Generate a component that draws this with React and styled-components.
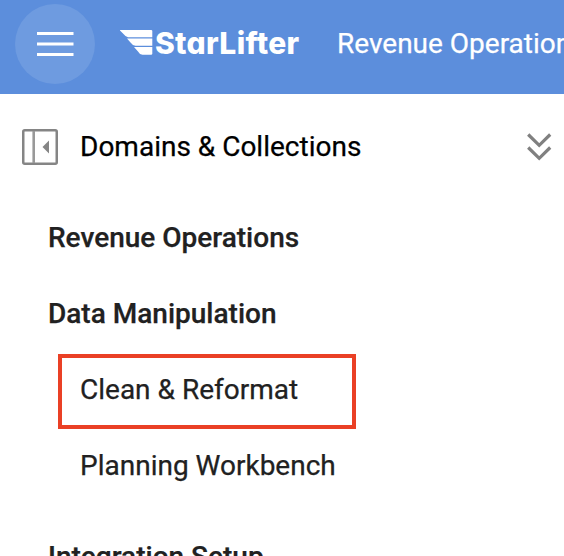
import React from "react";
import styled, { createGlobalStyle } from "styled-components";

const GlobalStyle = createGlobalStyle`
  * { box-sizing: border-box; }
  html, body { margin: 0; height: 556px; overflow: hidden; background: #fff; }
`;

const Page = styled.div`
  width: 564px;
  height: 556px;
  overflow: hidden;
  background: #fff;
  font-family: Roboto, "Liberation Sans", sans-serif;
  font-size: 28px;
  line-height: 32px;
  white-space: nowrap;
  -webkit-text-stroke: 0.25px currentColor;
`;

const TopBar = styled.header`
  display: flex;
  height: 94px;
  padding-left: 15px;
  background: #5c8edc;
  color: #fff;
  overflow: hidden;
`;

const MenuButton = styled.button`
  flex: none;
  width: 80px;
  height: 80px;
  margin-top: 4px;
  padding: 0;
  border: 0;
  border-radius: 50%;
  background: #6e9be0;
`;

const Icon = styled.svg`
  display: block;
  flex: none;
`;

const Brand = styled.div`
  display: flex;
  flex: none;
  width: 217px;
  margin-left: 25px;
  padding-top: 26px;
`;

const BrandName = styled.span`
  margin-left: 1px;
  font-family: Inter, sans-serif;
  font-size: 30px;
  font-weight: 800;
  font-feature-settings: "cv11";
  line-height: 34px;
  letter-spacing: 0.3px;
  -webkit-text-stroke: 0;
`;

const Workspace = styled.span`
  flex: none;
  padding-top: 28px;
`;

const PanelHeader = styled.div`
  display: flex;
  align-items: center;
  height: 104px;
  padding: 2px 12px 0 22px;
  color: #000;
`;

const PanelTitle = styled.h1`
  flex: 1;
  margin: 0 0 0 22px;
  font: inherit;
`;

const Tree = styled.nav`
  display: flex;
  flex-direction: column;
  padding: 2px 0 0 48px;
  color: #212121;
`;

const Group = styled.div`
  height: 76px;
  padding-top: ${(p) => p.$top || 22}px;
  font-weight: 500;
`;

const Item = styled.div`
  width: 298px;
  height: 76px;
  margin-left: 10px;
  padding: 22px 0 0 22px;
`;

const SelectedItem = styled(Item)`
  height: 75px;
  margin-top: 2px;
  margin-bottom: -1px;
  padding: 16px 0 0 18px;
  border: 4px solid #ea4025;
`;

export default function App() {
  return (
    <>
      <GlobalStyle />
      <Page>
        <TopBar>
          <MenuButton aria-label="Menu">
            <Icon width="80" height="80" viewBox="0 0 80 80" fill="#fff">
              <path d="M22 28h36.500v3H22zM22 38.500h36.500v3H22zM22 49h36.500v3H22z" />
            </Icon>
          </MenuButton>
          <Brand>
            <Icon width="34" height="34" viewBox="0 0 34 34" fill="#fff">
              <path d="M-.5 4H31.500L32.300 4.800V11.200H8Q5.500 10.800 3.500 8Z" />
              <path d="M7 12.400H32.300V19.700H15.500Q12.500 19.500 10.500 16.500Z" />
              <path d="M14 20.900H32.300V28L31.500 28.800H22.500Q19.500 28.500 18 25.500Z" />
            </Icon>
            <BrandName>StarLifter</BrandName>
          </Brand>
          <Workspace>Revenue Operations</Workspace>
        </TopBar>
        <PanelHeader>
          <Icon width="36" height="36" viewBox="0 0 36 36">
            <rect x="1.250" y="1.250" width="33.500" height="33.500" rx="1.500" fill="none" stroke="#858585" strokeWidth="2.500" />
            <path d="M11.700 2v32" stroke="#999" strokeWidth="2.600" />
            <path d="M20.500 18L27 11.500v13z" fill="#858585" />
          </Icon>
          <PanelTitle>Domains &amp; Collections</PanelTitle>
          <Icon width="25" height="28" viewBox="0 0 25 28" fill="none" stroke="#808080" strokeWidth="3.200">
            <path d="M1.200 1.500L12.200 12.300L23.200 1.500M1.200 14.500L12.200 25.300L23.200 14.500" />
          </Icon>
        </PanelHeader>
        <Tree>
          <Group>Revenue Operations</Group>
          <Group>Data Manipulation</Group>
          <SelectedItem>Clean &amp; Reformat</SelectedItem>
          <Item>Planning Workbench</Item>
          <Group $top={37}>Integration Setup</Group>
        </Tree>
      </Page>
    </>
  );
}
